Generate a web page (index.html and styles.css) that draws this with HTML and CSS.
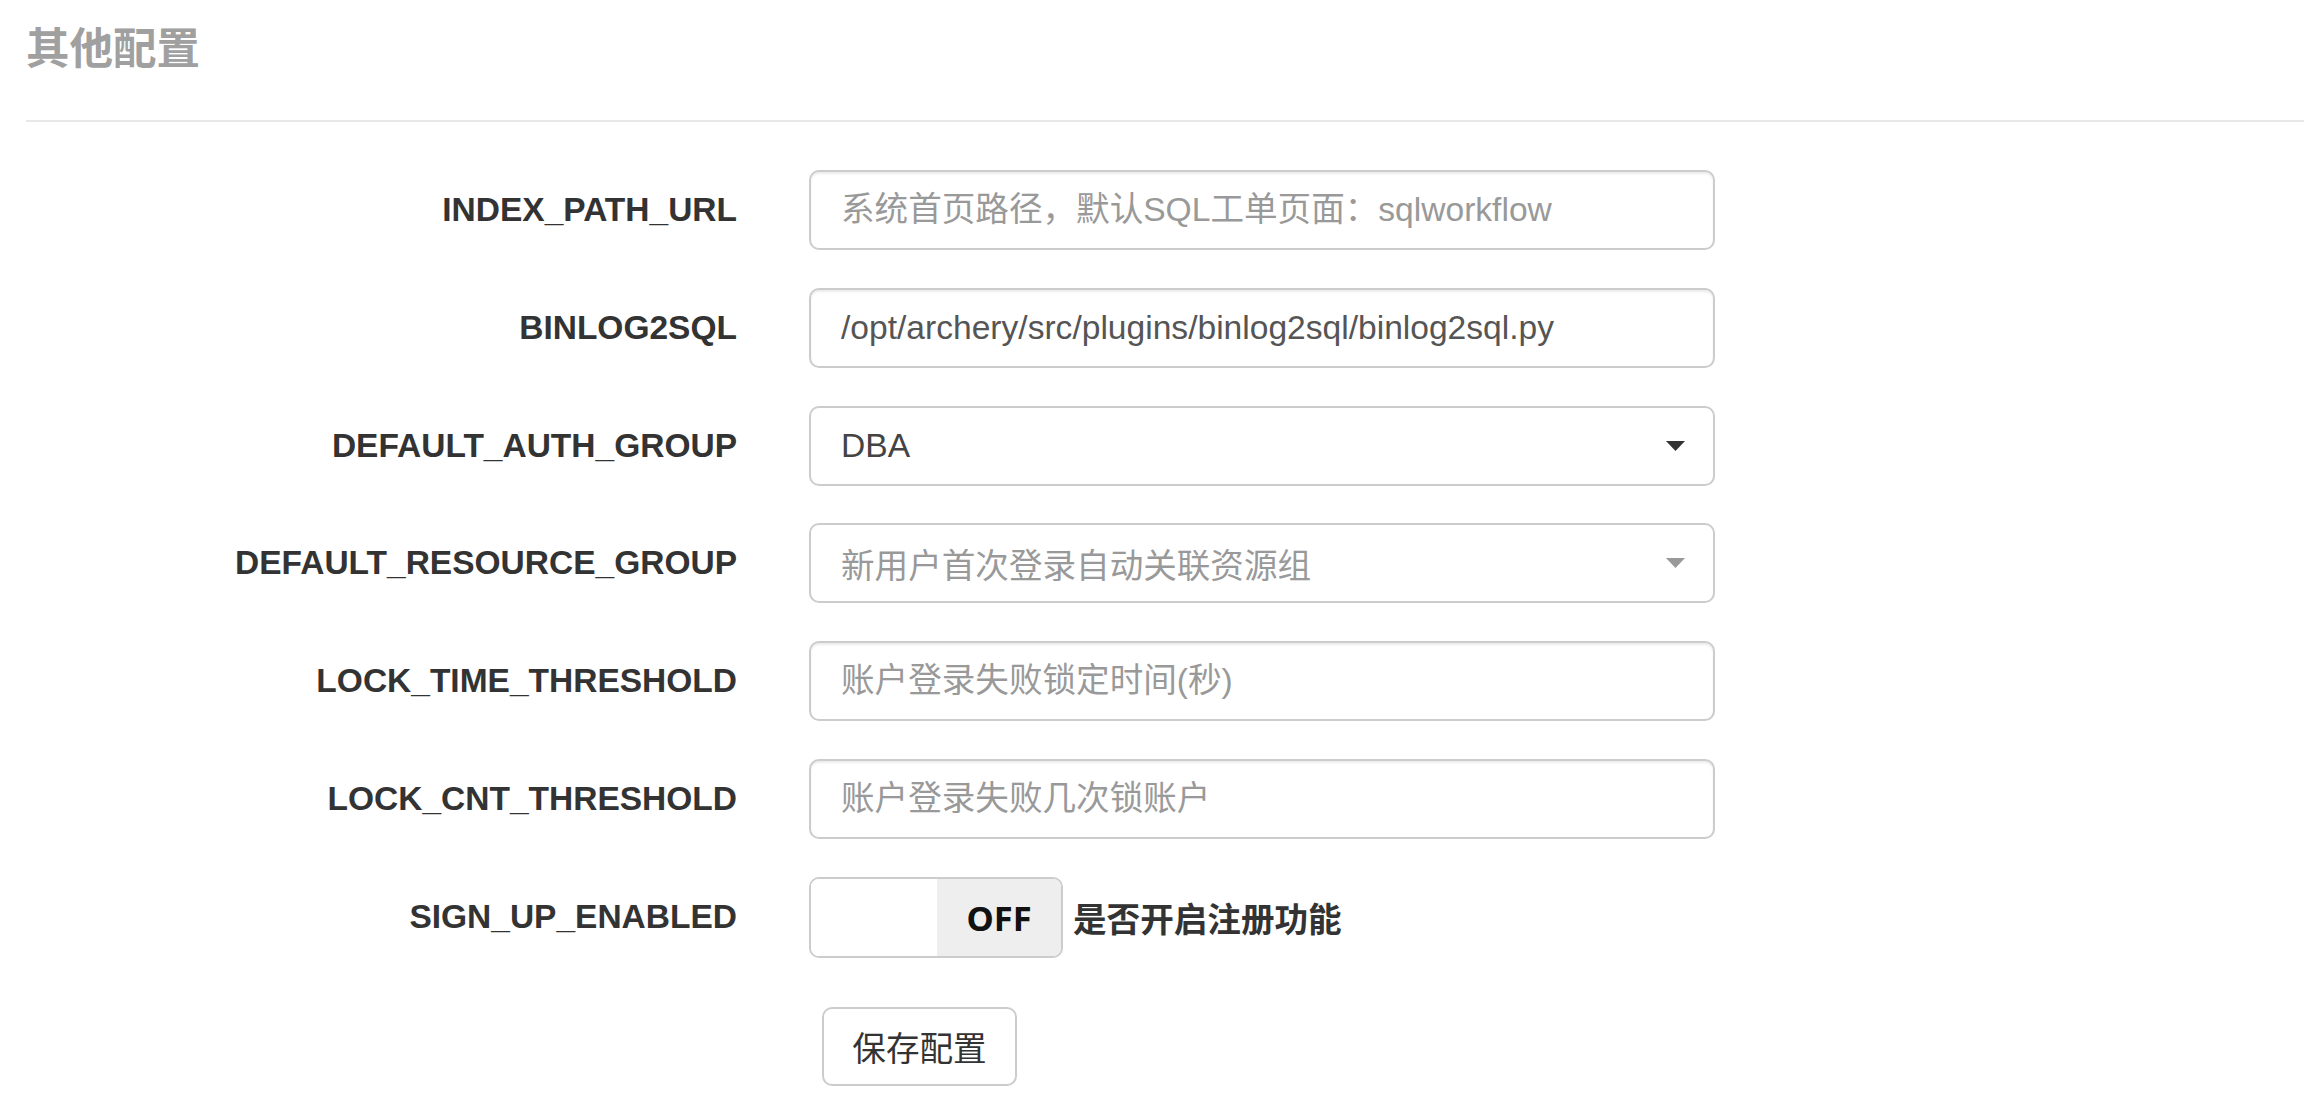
FILE: index.html
```html
<!DOCTYPE html>
<html lang="zh-CN">
<head>
<meta charset="utf-8">
<title>其他配置</title>
<link rel="stylesheet" href="styles.css">
</head>
<body>
<div class="page">
  <h3 class="title">其他配置</h3>
  <hr class="divider">
  <form class="form">
    <label class="label">INDEX_PATH_URL</label>
    <div class="field"><input class="control" type="text" placeholder="系统首页路径，默认SQL工单页面：sqlworkflow"></div>

    <label class="label">BINLOG2SQL</label>
    <div class="field"><input class="control value" type="text" value="/opt/archery/src/plugins/binlog2sql/binlog2sql.py"></div>

    <label class="label">DEFAULT_AUTH_GROUP</label>
    <div class="field">
      <div class="control select">
        <span class="select-text">DBA</span>
        <svg class="caret" width="19" height="10" viewBox="0 0 19 10"><polygon points="0,0 19,0 9.5,10" fill="#333"/></svg>
      </div>
    </div>

    <label class="label">DEFAULT_RESOURCE_GROUP</label>
    <div class="field">
      <div class="control select">
        <span class="select-text placeholder">新用户首次登录自动关联资源组</span>
        <svg class="caret" width="19" height="10" viewBox="0 0 19 10"><polygon points="0,0 19,0 9.5,10" fill="#999"/></svg>
      </div>
    </div>

    <label class="label">LOCK_TIME_THRESHOLD</label>
    <div class="field"><input class="control" type="text" placeholder="账户登录失败锁定时间(秒)"></div>

    <label class="label">LOCK_CNT_THRESHOLD</label>
    <div class="field"><input class="control" type="text" placeholder="账户登录失败几次锁账户"></div>

    <label class="label">SIGN_UP_ENABLED</label>
    <div class="field switch-field">
      <div class="switch">
        <span class="switch-blank"></span>
        <span class="switch-off">OFF</span>
      </div>
      <span class="switch-text">是否开启注册功能</span>
    </div>

    <div class="label"></div>
    <div class="field">
      <button class="btn" type="button">保存配置</button>
    </div>
  </form>
</div>
</body>
</html>
```

FILE: styles.css
```css
html, body {
  margin: 0;
  padding: 0;
  background: #fff;
}

body {
  font-family: "Liberation Sans", "Noto Sans CJK SC", sans-serif;
  color: #333;
}

.page {
  padding: 22px 19px 0 26px;
}

.title {
  margin: 0;
  font-family: "Noto Sans CJK SC", sans-serif;
  font-size: 43.5px;
  line-height: 47px;
  font-weight: 700;
  color: #a0a0a0;
}

.divider {
  margin: 51px 0 0 0;
  border: 0;
  border-top: 2px solid #e8e8e8;
  height: 0;
}

.form {
  margin-top: 48px;
  display: grid;
  grid-template-columns: 711px 906px;
  column-gap: 72px;
  row-gap: 37.8px;
  align-items: center;
}

.label {
  text-align: right;
  font-family: "Liberation Sans", "Noto Sans CJK SC", sans-serif;
  font-weight: 700;
  font-size: 33.5px;
  color: #333;
}

.field {
  display: flex;
  align-items: center;
}

.control {
  box-sizing: border-box;
  width: 906px;
  height: 80px;
  margin: 0;
  padding: 0 30px;
  border: 2px solid #ccc;
  border-radius: 10px;
  background: #fff;
  box-shadow: inset 0 2px 2px rgba(0, 0, 0, 0.075);
  font-family: "Liberation Sans", "Noto Sans CJK SC", sans-serif;
  font-size: 33.6px;
  color: #555;
  outline: none;
}

.control::placeholder {
  color: #999;
  opacity: 1;
}

.select {
  display: flex;
  align-items: center;
  padding-right: 28px;
  box-shadow: none;
}

.select-text {
  color: #444;
}

.select-text.placeholder {
  color: #999;
}

.caret {
  margin-left: auto;
  display: block;
}

.switch {
  box-sizing: border-box;
  display: flex;
  height: 81px;
  border: 2px solid #ccc;
  border-radius: 10px;
  overflow: hidden;
}

.switch-blank {
  width: 126px;
  background: #fff;
}

.switch-off {
  width: 124px;
  background: #eee;
  display: flex;
  align-items: center;
  justify-content: center;
  font-family: "Noto Sans", "Liberation Sans", sans-serif;
  font-weight: 700;
  font-size: 34.5px;
  color: #111;
}

.switch-text {
  margin-left: 10px;
  font-family: "Noto Sans CJK SC", sans-serif;
  font-weight: 700;
  font-size: 33.6px;
  color: #333;
}

.btn {
  box-sizing: border-box;
  margin: 11px 0 0 13px;
  width: 195px;
  height: 79px;
  padding: 0;
  border: 2px solid #ccc;
  border-radius: 10px;
  background: #fff;
  font-family: "Noto Sans CJK SC", sans-serif;
  font-size: 33.6px;
  color: #333;
}
```
